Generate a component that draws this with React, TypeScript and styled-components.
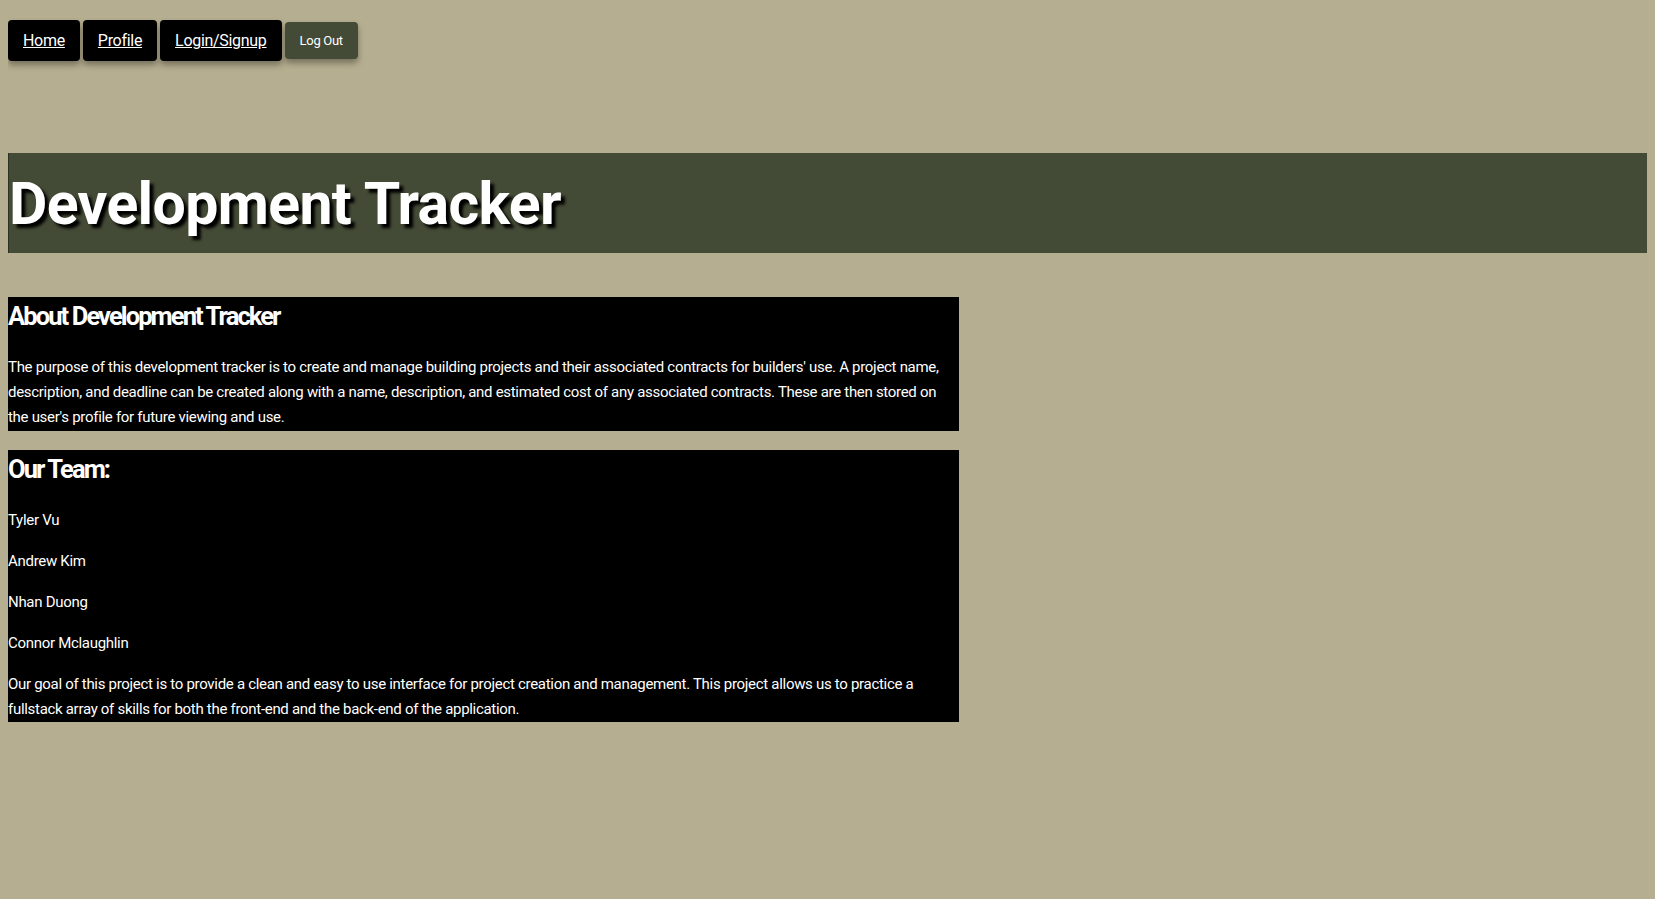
import React from 'react';
import styled, { createGlobalStyle } from 'styled-components';

const GlobalStyle = createGlobalStyle`
  html {
    overflow: hidden;
    background-color: #b6ae90;
  }
  body {
    margin: 8px;
    background-color: #b6ae90;
    font-family: Roboto, "Liberation Sans", sans-serif;
    color: #fff;
  }
`;

const Nav = styled.nav`
  display: flex;
  align-items: center;
  gap: 3px;
  padding-top: 12px;
`;

const NavLink = styled.a`
  display: flex;
  align-items: center;
  height: 41px;
  padding: 0 15px;
  background-color: #000;
  color: #fff;
  font-size: 16px;
  letter-spacing: -0.3px;
  text-decoration: underline;
  border-radius: 4px;
  box-shadow: 0 4px 6px rgba(0, 0, 0, 0.35);
  cursor: pointer;
`;

const LogOut = styled.button`
  height: 37px;
  padding: 0 15px;
  background-color: #434a35;
  color: #fff;
  font-family: inherit;
  font-size: 13px;
  letter-spacing: -0.3px;
  border: none;
  border-radius: 4px;
  box-shadow: 0 4px 6px rgba(0, 0, 0, 0.35);
`;

const Header = styled.header`
  box-sizing: border-box;
  width: 100vw;
  margin-top: 92px;
  height: 100px;
  display: flex;
  align-items: center;
  background-color: #434a35;
  border-left: 1px solid #2c3122;
`;

const Title = styled.h1`
  margin: 0;
  font-size: 59px;
  font-weight: bold;
  letter-spacing: -0.65px;
  text-shadow: 4px 4px 3px #000;
`;

const Card = styled.section<{ $gap: number }>`
  width: 951px;
  background-color: #000;
  margin-top: ${(p) => p.$gap}px;
  padding-bottom: 0.5px;
`;

const CardTitle = styled.h2`
  margin: 0 0 24px;
  padding-top: 4px;
  font-size: 25.5px;
  font-weight: bold;
  letter-spacing: -1.9px;
`;

const Text = styled.p`
  margin: 16px 0 0;
  font-size: 15px;
  line-height: 25px;
  letter-spacing: -0.3px;
`;

const Member = styled.p`
  margin: 16px 0 0;
  font-size: 15px;
  line-height: 25px;
  letter-spacing: -0.3px;
`;

const team = ['Tyler Vu', 'Andrew Kim', 'Nhan Duong', 'Connor Mclaughlin'];

const App: React.FC = () => {
  return (
    <>
      <GlobalStyle />
      <Nav>
        <NavLink>Home</NavLink>
        <NavLink>Profile</NavLink>
        <NavLink>Login/Signup</NavLink>
        <LogOut>Log Out</LogOut>
      </Nav>
      <Header>
        <Title>Development Tracker</Title>
      </Header>
      <main>
        <Card $gap={44}>
          <CardTitle>About Development Tracker</CardTitle>
          <Text>
            The purpose of this development tracker is to create and manage building projects and their
            associated contracts for builders' use. A project name, description, and deadline can be created
            along with a name, description, and estimated cost of any associated contracts. These are then
            stored on the user's profile for future viewing and use.
          </Text>
        </Card>
        <Card $gap={19}>
          <CardTitle>Our Team:</CardTitle>
          {team.map((name) => (
            <Member key={name}>{name}</Member>
          ))}
          <Text>
            Our goal of this project is to provide a clean and easy to use interface for project creation and
            management. This project allows us to practice a fullstack array of skills for both the front-end
            and the back-end of the application.
          </Text>
        </Card>
      </main>
    </>
  );
};

export default App;
